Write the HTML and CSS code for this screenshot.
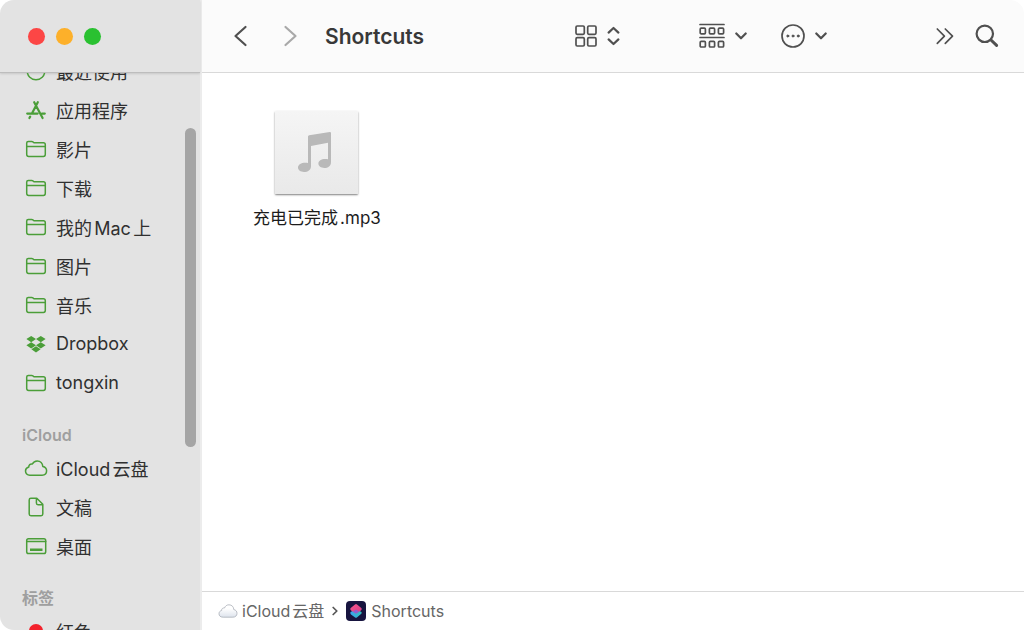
FILE: index.html
```
<!DOCTYPE html>
<html lang="zh-CN">
<head>
    <meta charset="UTF-8">
    <meta name="viewport" content="width=device-width, initial-scale=1.0">
    <title>Shortcuts</title>
    <link rel="stylesheet" href="styles.css">
</head>
<body>
    <svg class="sprite" aria-hidden="true">
        <symbol id="folder" viewBox="0 0 24 24">
            <path d="M2.7 17.6V6.1Q2.7 4.4 4.4 4.4H7.6Q8.5 4.4 9.1 5L9.5 5.4Q10 5.8 10.8 5.8H19.4Q21.3 5.8 21.3 7.7V17.6Q21.3 19.4 19.4 19.4H4.6Q2.7 19.4 2.7 17.6ZM2.7 9.6H21.3"/>
        </symbol>
        <symbol id="chevron" viewBox="0 0 12 10">
            <path d="M1.3 2.5L6 7.3L10.7 2.5"/>
        </symbol>
    </svg>

    <div class="window">
        <aside class="sidebar">
            <div class="controls">
                <button class="dot red" aria-label="关闭"></button>
                <button class="dot yellow" aria-label="最小化"></button>
                <button class="dot green" aria-label="缩放"></button>
            </div>
            <nav class="places">
                <div class="scrolled">
                    <ul>
                        <li><a href="#"><svg class="icon" viewBox="0 0 24 24"><circle cx="12" cy="12" r="8.8"/><path d="M12 6.5V12H8"/></svg>最近使用</a></li>
                        <li><a href="#"><svg class="icon thick" viewBox="0 0 24 24"><path d="M10.2 4.2L18.6 20M13.8 4.2L8.2 15M6.2 18.6L5.4 20M3.2 15.6H13.6M18 15.6H20.8"/></svg>应用程序</a></li>
                        <li><a href="#"><svg class="icon"><use href="#folder"/></svg>影片</a></li>
                        <li><a href="#"><svg class="icon"><use href="#folder"/></svg>下载</a></li>
                        <li><a href="#"><svg class="icon"><use href="#folder"/></svg>我的Mac上</a></li>
                        <li><a href="#"><svg class="icon"><use href="#folder"/></svg>图片</a></li>
                        <li><a href="#"><svg class="icon"><use href="#folder"/></svg>音乐</a></li>
                        <li><a href="#"><svg class="icon filled" viewBox="0 0 24 24"><path d="M7.2 4L12 7.1L7.2 10.2L2.4 7.1ZM16.8 4L21.6 7.1L16.8 10.2L12 7.1ZM7.2 10.2L12 13.3L7.2 16.4L2.4 13.3ZM16.8 10.2L21.6 13.3L16.8 16.4L12 13.3ZM12 14.3L16.6 17.3L12 20.4L7.4 17.3Z"/></svg>Dropbox</a></li>
                        <li><a href="#"><svg class="icon"><use href="#folder"/></svg>tongxin</a></li>
                    </ul>
                    <h2>iCloud</h2>
                    <ul>
                        <li><a href="#"><svg class="icon" viewBox="0 0 24 24"><path d="M5.8 19.2C3.2 19.2 1.5 17.4 1.5 15.1C1.5 13.1 2.8 11.6 4.8 11.1C4.6 9 6.3 7.5 8.4 8C9.3 6 11 4.9 13.2 4.9C16.4 4.9 18.6 7.3 18.8 10.4C21 10.8 22.6 12.4 22.6 14.8C22.6 17.4 20.7 19.2 18.1 19.2Z"/></svg>iCloud云盘</a></li>
                        <li><a href="#"><svg class="icon" viewBox="0 0 24 24"><path d="M12.8 3.2H6.9Q5.2 3.2 5.2 4.9V19.1Q5.2 20.8 6.9 20.8H17.1Q18.8 20.8 18.8 19.1V9.3ZM12.4 3.2V8.1Q12.4 9.7 14 9.7H18.8"/></svg>文稿</a></li>
                        <li><a href="#"><svg class="icon" viewBox="0 0 24 24"><rect x="2.7" y="4.7" width="19" height="14.8" rx="1.8"/><path d="M2.7 7.5H21.7"/><path class="solid" d="M6 14.4H18.5V17H6Z"/></svg>桌面</a></li>
                    </ul>
                    <h2>标签</h2>
                    <ul>
                        <li><a href="#"><svg class="icon tag" viewBox="0 0 24 24"><circle cx="12" cy="12" r="7"/></svg>红色</a></li>
                    </ul>
                </div>
            </nav>
            <div class="scrollbar"></div>
        </aside>

        <main class="content">
            <header class="toolbar">
                <button aria-label="后退"><svg width="20" height="24" viewBox="0 0 20 24"><path d="M15.5 3L5.5 12L15.5 21"/></svg></button>
                <button class="forward" aria-label="前进"><svg width="20" height="24" viewBox="0 0 20 24"><path d="M5.5 3L15.5 12L5.5 21"/></svg></button>
                <h1>Shortcuts</h1>
                <button class="view" aria-label="显示方式">
                    <svg class="thin" width="22" height="22" viewBox="0 0 22 22"><rect x="1" y="1" width="8.3" height="8.3" rx="1.2"/><rect x="12.7" y="1" width="8.3" height="8.3" rx="1.2"/><rect x="1" y="12.7" width="8.3" height="8.3" rx="1.2"/><rect x="12.7" y="12.7" width="8.3" height="8.3" rx="1.2"/></svg>
                    <svg width="13" height="20" viewBox="0 0 13 20"><path d="M1.6 6.6L6.5 2L11.4 6.6M1.6 13.4L6.5 18L11.4 13.4"/></svg>
                </button>
                <button class="group" aria-label="分组">
                    <svg class="thin" width="26" height="26" viewBox="0 0 26 26"><path d="M1 1.5H25M1 14.5H25"/><rect x="1.2" y="5.2" width="5.2" height="5.6" rx="1"/><rect x="10.4" y="5.2" width="5.2" height="5.6" rx="1"/><rect x="19.4" y="5.2" width="5.2" height="5.6" rx="1"/><rect x="1.2" y="18.4" width="5.2" height="5.6" rx="1"/><rect x="10.4" y="18.4" width="5.2" height="5.6" rx="1"/><rect x="19.4" y="18.4" width="5.2" height="5.6" rx="1"/></svg>
                    <svg width="12" height="10"><use href="#chevron"/></svg>
                </button>
                <button class="actions" aria-label="操作">
                    <svg class="thin" width="24" height="24" viewBox="0 0 24 24"><circle cx="12" cy="12" r="11"/><g class="solid"><circle cx="6.8" cy="12" r="1"/><circle cx="12" cy="12" r="1"/><circle cx="17.2" cy="12" r="1"/></g></svg>
                    <svg width="12" height="10"><use href="#chevron"/></svg>
                </button>
                <button class="more" aria-label="更多"><svg class="thin" width="18" height="18" viewBox="0 0 18 18"><path d="M1.3 2L8.4 9.2L1.3 16.4M9.3 2L16.5 9.2L9.3 16.4"/></svg></button>
                <button class="search" aria-label="搜索"><svg width="24" height="24" viewBox="0 0 24 24"><circle cx="9.8" cy="9.8" r="8.2"/><path class="handle" d="M16 16L21.6 21.4"/></svg></button>
            </header>

            <section class="files">
                <figure class="file">
                    <svg class="thumb" viewBox="0 0 83 83"><path d="M33 25.5Q33 24.4 34.2 24.2L54.8 21.1Q56 21 56 22.2V51C56 55 53 57 49.3 57C46 57 43.4 55.3 43.4 52.6C43.4 49.3 47.5 47.2 53 48.3V31.8L36 35V55C36 59 32.8 61 29 61C25.6 61 23 59.2 23 56.6C23 53.2 27.5 51 33 52Z"/></svg>
                    <figcaption>充电已完成.mp3</figcaption>
                </figure>
            </section>

            <footer class="pathbar">
                <svg class="cloud" width="20" height="16" viewBox="0 0 20 16">
                    <defs><linearGradient id="sky" x2="0" y2="1"><stop offset="0.3" stop-color="#fff"/><stop offset="1" stop-color="#dde3ec"/></linearGradient></defs>
                    <path d="M4.8 14.2C2.4 14.2 1 12.8 1 10.8C1 9 2 7.9 3.6 7.5C3.5 5.7 4.9 4.7 6.5 5C7.3 3 8.8 1.8 11 1.8C13.8 1.8 15.7 3.8 15.8 6.6C17.8 6.9 19 8.4 19 10.3C19 12.6 17.5 14.2 15.2 14.2Z"/>
                </svg>
                <a href="#">iCloud云盘</a>
                <svg class="arrow" width="6" height="10" viewBox="0 0 6 10"><path d="M1.2 1.5L4.8 5L1.2 8.5"/></svg>
                <svg class="app" width="20" height="20" viewBox="0 0 20 20">
                    <defs>
                        <linearGradient id="pink" x2="1" y2="1"><stop offset="0" stop-color="#f8568d"/><stop offset="1" stop-color="#d83b86"/></linearGradient>
                        <linearGradient id="blue" x2="1" y2="0"><stop offset="0" stop-color="#38a4ef"/><stop offset="1" stop-color="#35bfc0"/></linearGradient>
                    </defs>
                    <rect width="20" height="20" rx="4" fill="#17143f"/>
                    <path d="M4.3 11.8Q4.3 11 5 10.7L10 8L15 10.7Q15.7 11 15.7 11.8Q15.7 12.6 15 13L10.9 16.5Q10 17.1 9.1 16.5L5 13.4Q4.3 12.8 4.3 11.8Z" fill="url(#blue)"/>
                    <path d="M4.3 8.1Q4.3 7.2 5 6.7L9 3.4Q10 2.8 11 3.4L15 6.7Q15.7 7.2 15.7 8.1Q15.7 9 15 9.4L10 12.5L5 9.4Q4.3 9 4.3 8.1Z" fill="url(#pink)"/>
                    <path d="M7 10.7L10 8.5L13 10.7L10 12.5Z" fill="#8c5fd4"/>
                </svg>
                <a href="#">Shortcuts</a>
            </footer>
        </main>
    </div>
</body>
</html>
```
FILE: styles.css
```
* {
    margin: 0;
    padding: 0;
    box-sizing: border-box;
}

body {
    background-color: #fff;
    font-family: Inter, "Noto Sans CJK SC", sans-serif;
    text-autospace: normal;
}

a {
    color: inherit;
    text-decoration: none;
}

button {
    display: flex;
    align-items: center;
    gap: 10px;
    border: none;
    background: none;
}

svg {
    flex: none;
    fill: none;
    stroke-linecap: round;
    stroke-linejoin: round;
}

.sprite {
    display: none;
}

.window {
    display: flex;
    height: 100vh;
    overflow: hidden;
    border-radius: 14px;
    background-color: #fff;
}

/* sidebar */
.sidebar {
    position: relative;
    display: flex;
    flex-direction: column;
    flex: none;
    width: 202px;
    background-color: #e3e3e3;
    border-right: 2px solid #ececec;
    color: #303030;
}

.controls {
    display: flex;
    flex: none;
    align-items: center;
    gap: 11px;
    height: 73px;
    padding-left: 28px;
    border-bottom: 1px solid #bdbdbd;
    box-shadow: 0 1px 2px rgba(0, 0, 0, 0.12);
}

.dot {
    width: 17px;
    height: 17px;
    border-radius: 50%;
}

.red {
    background-color: #fc4645;
}

.yellow {
    background-color: #fdb02a;
}

.green {
    background-color: #2ac131;
}

.places {
    flex: 1;
    min-height: 0;
    overflow: hidden;
}

/* list scrolled part of the first row up */
.scrolled {
    margin-top: -22px;
}

.places ul {
    list-style: none;
}

.places a {
    display: flex;
    align-items: center;
    gap: 8px;
    height: 39px;
    padding-left: 24px;
    font-size: 18px;
    white-space: nowrap;
}

.places h2 {
    height: 26px;
    margin-top: 20px;
    padding-left: 22px;
    color: #9f9f9f;
    font-size: 16px;
    font-weight: 600;
    line-height: 26px;
}

.icon {
    width: 24px;
    height: 24px;
    stroke: #4b9e39;
    stroke-width: 1.5;
}

.thick {
    stroke-width: 2.2;
}

.filled {
    fill: #4b9e39;
    stroke: none;
}

.icon .solid {
    fill: #4b9e39;
    stroke: none;
}

.tag {
    fill: #f3222c;
    stroke: none;
}

.scrollbar {
    position: absolute;
    top: 128px;
    right: 4px;
    width: 11px;
    height: 319px;
    border-radius: 6px;
    background-color: #a5a5a5;
}

/* content */
.content {
    display: flex;
    flex: 1;
    flex-direction: column;
    min-width: 0;
}

.toolbar {
    display: flex;
    align-items: center;
    height: 73px;
    padding: 0 25px 0 28px;
    border-bottom: 1px solid #d9d9d9;
    background-color: #fbfbfb;
}

.toolbar svg {
    stroke: #505050;
    stroke-width: 2.2;
}

.toolbar .thin {
    stroke-width: 1.7;
}

.toolbar .forward {
    margin-left: 30px;
}

.toolbar .forward svg {
    stroke: #a9a9a9;
}

.toolbar h1 {
    flex: 1;
    margin-left: 25px;
    color: #383838;
    font-size: 21px;
    font-weight: 600;
}

.toolbar .group {
    margin-left: 79px;
}

.toolbar .actions {
    margin-left: 34px;
}

.toolbar .solid {
    fill: #505050;
    stroke-width: 1;
}

.toolbar .more {
    margin-left: 109px;
}

.toolbar .search {
    margin-left: 21px;
}

.toolbar .handle {
    stroke-width: 3;
}

.files {
    display: flex;
    flex: 1;
    align-items: flex-start;
    padding: 38px 51px;
}

.file {
    display: flex;
    flex-direction: column;
    align-items: center;
    gap: 12px;
}

.thumb {
    width: 83px;
    height: 83px;
    border-radius: 1px;
    background: linear-gradient(#f5f5f5, #e9e9e9);
    box-shadow: 0 1px 2px rgba(0, 0, 0, 0.5);
    fill: #b9b9b9;
}

.file figcaption {
    color: #1c1c1c;
    font-size: 17px;
    line-height: 24px;
}

.pathbar {
    display: flex;
    align-items: center;
    height: 39px;
    padding-left: 16px;
    border-top: 1px solid #d9d9d9;
    color: #666;
    font-size: 16px;
    line-height: 20px;
}

.cloud {
    margin-right: 4px;
    fill: url(#sky);
    stroke: #a9aeb8;
    stroke-width: 0.8;
}

.arrow {
    margin: 0 8px;
    stroke: #555;
    stroke-width: 1.7;
}

.app {
    margin-right: 5px;
}
```
